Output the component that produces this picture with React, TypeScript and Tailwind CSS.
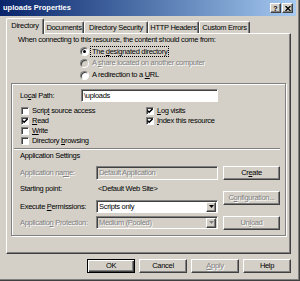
import React from "react";

const raised =
  "border border-t-white border-l-white border-r-[#404040] border-b-[#404040] shadow-[inset_-1px_-1px_0_#808080]";
const sunken =
  "border border-t-[#808080] border-l-[#808080] border-r-white border-b-white shadow-[inset_1px_1px_0_#404040]";
const grayText = "text-[#808080] [text-shadow:1px_1px_0_#fff]";

function Radio({ checked, disabled }: { checked?: boolean; disabled?: boolean }) {
  return (
    <span
      className={`flex items-center justify-center w-[9px] h-[9px] rounded-full shrink-0 ${sunken} ${
        disabled ? "bg-[#d4d0c8]" : "bg-white"
      }`}
    >
      {checked && <span className="w-[3px] h-[3px] rounded-full bg-black" />}
    </span>
  );
}

function Check({ checked }: { checked?: boolean }) {
  return (
    <span className={`flex items-center justify-center w-[8px] h-[8px] bg-white shrink-0 ${sunken}`}>
      {checked && (
        <svg width="6" height="6" viewBox="0 0 7 7">
          <path d="M0.5 3 L2.5 5 L6.5 1" stroke="#000" strokeWidth="1.6" fill="none" />
        </svg>
      )}
    </span>
  );
}

function CheckRow({ checked, children }: { checked?: boolean; children: React.ReactNode }) {
  return (
    <div className="flex items-center gap-[3px] h-[10px]">
      <Check checked={checked} />
      <span>{children}</span>
    </div>
  );
}

function Button({
  children,
  disabled,
  primary,
  className = "",
}: {
  children: React.ReactNode;
  disabled?: boolean;
  primary?: boolean;
  className?: string;
}) {
  return (
    <div
      className={`flex items-center justify-center bg-[#d4d0c8] ${
        primary
          ? "border border-black shadow-[inset_1px_1px_0_#fff,inset_-1px_-1px_0_#404040,inset_-2px_-2px_0_#808080]"
          : raised
      } ${disabled ? grayText : ""} ${className}`}
    >
      <span>{children}</span>
    </div>
  );
}

function Select({ value, disabled }: { value: string; disabled?: boolean }) {
  return (
    <div
      className={`flex items-center w-[122px] h-[13px] ${sunken} ${disabled ? "bg-[#d4d0c8]" : "bg-white"}`}
    >
      <span className={`flex-1 pl-[2px] ${disabled ? grayText : ""}`}>{value}</span>
      <span className={`flex items-center justify-center w-[10px] h-[10px] mr-[1px] bg-[#d4d0c8] ${raised}`}>
        <svg width="5" height="3" viewBox="0 0 5 3">
          <path d="M0 0 H5 L2.5 3 Z" fill={disabled ? "#808080" : "#000"} />
        </svg>
      </span>
    </div>
  );
}

const tabs = [
  { label: "Directory", w: "w-[38px]", active: true },
  { label: "Documents", w: "w-[40px]" },
  { label: "Directory Security", w: "w-[64px]" },
  { label: "HTTP Headers", w: "w-[51px]" },
  { label: "Custom Errors", w: "w-[51px]" },
];

export default function App() {
  return (
    <div className="w-[300px] h-[281px] bg-[#d4d0c8] overflow-hidden font-['Liberation_Sans',Arial,sans-serif] text-[7.5px] tracking-[-0.3px] leading-[10px] text-black border-r border-b border-[#404040] shadow-[inset_-1px_-1px_0_#808080]">
      {/* Title bar */}
      <div className="flex items-center h-[16px] w-[296px] pl-[3px] pr-[3px] bg-gradient-to-r from-[#0a246a] to-[#a6caf0]">
        <span className="flex-1 font-bold text-white tracking-normal">uploads Properties</span>
        <div className={`flex items-center justify-center w-[11px] h-[10px] bg-[#d4d0c8] ${raised}`}>
          <span className="font-bold text-[7px] leading-none tracking-normal">?</span>
        </div>
        <div className={`flex items-center justify-center w-[11px] h-[10px] ml-[1px] bg-[#d4d0c8] ${raised}`}>
          <svg width="6" height="5" viewBox="0 0 6 5">
            <path d="M0.5 0 L5.5 5 M5.5 0 L0.5 5" stroke="#000" strokeWidth="1.3" />
          </svg>
        </div>
      </div>

      <div className="pl-[6px] pt-[2px]">
        {/* Tabs */}
        <div className="flex items-end h-[15px]">
          {tabs.map((t) => (
            <div
              key={t.label}
              className={`flex items-center justify-center ${t.w} border-l border-t border-white border-r border-r-[#404040] shadow-[inset_-1px_0_0_#808080] rounded-t-[2px] bg-[#d4d0c8] ${
                t.active ? "h-[16px] -mb-[1px] relative z-10 pb-[2px]" : "h-[12px]"
              }`}
            >
              {t.label}
            </div>
          ))}
        </div>

        {/* Panel */}
        <div className="w-[285px] h-[221px] border border-t-white border-l-white border-r-[#404040] border-b-[#404040] shadow-[inset_-1px_-1px_0_#808080]">
          <div className="pl-[11px] pt-[1px]">When connecting to this resource, the content should come from:</div>
          <div className="pl-[73px]">
            <div className="flex items-center gap-[2px] h-[12px]">
              <Radio checked />
              <span className="inline-block h-[9px] leading-[9px] px-[1px] outline outline-1 outline-dotted outline-black">
                The <u>d</u>esignated directory
              </span>
            </div>
            <div className="flex items-center gap-[3px] h-[12px]">
              <Radio disabled />
              <span className={grayText}>
                A <u>s</u>hare located on another computer
              </span>
            </div>
            <div className="flex items-center gap-[3px] h-[12px]">
              <Radio />
              <span>
                A redirection to a <u>U</u>RL
              </span>
            </div>
          </div>

          {/* Inner frame */}
          <div className="ml-[4px] mt-[2px] w-[275px] h-[153px] border border-[#808080] shadow-[inset_1px_1px_0_#fff,1px_1px_0_#fff]">
            <div className="flex items-center mt-[5px] pl-[8px] h-[13px]">
              <span className="w-[61px]">
                Lo<u>c</u>al Path:
              </span>
              <div className={`flex items-center w-[137px] h-[13px] pl-[2px] bg-white ${sunken}`}>\uploads</div>
            </div>

            <div className="flex mt-[4px] pl-[9px]">
              <div className="w-[125px]">
                <CheckRow>
                  Scrip<u>t</u> source access
                </CheckRow>
                <CheckRow checked>
                  <u>R</u>ead
                </CheckRow>
                <CheckRow>
                  <u>W</u>rite
                </CheckRow>
                <CheckRow>
                  Directory <u>b</u>rowsing
                </CheckRow>
              </div>
              <div>
                <CheckRow checked>
                  <u>L</u>og visits
                </CheckRow>
                <CheckRow checked>
                  <u>I</u>ndex this resource
                </CheckRow>
              </div>
            </div>

            <div className="mt-[2px] ml-[2px] w-[266px] h-[2px] border-t border-[#808080] border-b border-b-white" />
            <div className="mt-[1px] pl-[8px] h-[10px]">Application Settings</div>

            <div className="flex mt-[5px] pl-[8px]">
              <div>
                <div className="flex items-center h-[14px]">
                  <span className={`w-[76px] ${grayText}`}>
                    Application na<u>m</u>e:
                  </span>
                  <div className={`flex items-center w-[122px] h-[14px] pl-[2px] bg-[#d4d0c8] ${sunken}`}>
                    <span className={grayText}>Default Application</span>
                  </div>
                </div>
                <div className="flex items-center h-[14px] mt-[2px]">
                  <span className="w-[78px]">Starting point:</span>
                  <span>&lt;Default Web Site&gt;</span>
                </div>
                <div className="flex items-center h-[13px] mt-[4px]">
                  <span className="w-[76px]">
                    Execute <u>P</u>ermissions:
                  </span>
                  <Select value="Scripts only" />
                </div>
                <div className="flex items-center h-[13px] mt-[3px]">
                  <span className={`w-[76px] ${grayText}`}>
                    Applicatio<u>n</u> Protection:
                  </span>
                  <Select value="Medium (Pooled)" disabled />
                </div>
              </div>
              <div className="ml-[5px]">
                <Button className="w-[57px] h-[14px]">
                  Cr<u>e</u>ate
                </Button>
                <Button disabled className="w-[57px] h-[14px] mt-[11px]">
                  C<u>o</u>nfiguration...
                </Button>
                <Button disabled className="w-[57px] h-[14px] mt-[11px]">
                  Un<u>l</u>oad
                </Button>
              </div>
            </div>
          </div>
        </div>

        {/* Dialog buttons */}
        <div className="flex justify-end gap-[4px] w-[285px] mt-[5px]">
          <Button primary className="w-[48px] h-[14px]">
            OK
          </Button>
          <Button className="w-[48px] h-[14px]">Cancel</Button>
          <Button disabled className="w-[48px] h-[14px]">
            <u>A</u>pply
          </Button>
          <Button className="w-[48px] h-[14px]">Help</Button>
        </div>
      </div>
    </div>
  );
}
